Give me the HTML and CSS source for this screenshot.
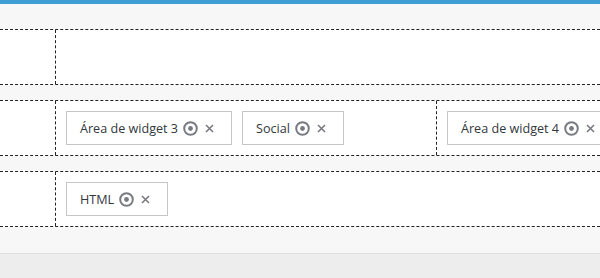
FILE: index.html
```html
<!DOCTYPE html>
<html lang="pt">
<head>
    <meta charset="UTF-8">
    <meta name="viewport" content="width=device-width, initial-scale=1.0">
    <title>Áreas de widgets</title>
    <link rel="stylesheet" href="styles.css">
</head>
<body>

<div class="top-bar"></div>

<div class="area-rows">
    <div class="area-row">
        <div class="area-label"></div>
        <div class="area-cell area-cell-wide"></div>
    </div>

    <div class="area-row">
        <div class="area-label"></div>
        <div class="area-cell area-cell-split">
            <span class="widget-chip">Área de widget 3
                <svg class="chip-target" width="15" height="15" viewBox="0 0 15 15"><circle cx="7.5" cy="7.5" r="6.3" fill="none" stroke="#787c82" stroke-width="2"/><circle cx="7.5" cy="7.5" r="2.4" fill="#787c82"/></svg>
                <svg class="chip-close" width="9" height="9" viewBox="0 0 9 9"><path d="M1 1L8 8M8 1L1 8" stroke="#787c82" stroke-width="1.6"/></svg>
            </span>
            <span class="widget-chip">Social
                <svg class="chip-target" width="15" height="15" viewBox="0 0 15 15"><circle cx="7.5" cy="7.5" r="6.3" fill="none" stroke="#787c82" stroke-width="2"/><circle cx="7.5" cy="7.5" r="2.4" fill="#787c82"/></svg>
                <svg class="chip-close" width="9" height="9" viewBox="0 0 9 9"><path d="M1 1L8 8M8 1L1 8" stroke="#787c82" stroke-width="1.6"/></svg>
            </span>
        </div>
        <div class="area-cell area-cell-wide">
            <span class="widget-chip">Área de widget 4
                <svg class="chip-target" width="15" height="15" viewBox="0 0 15 15"><circle cx="7.5" cy="7.5" r="6.3" fill="none" stroke="#787c82" stroke-width="2"/><circle cx="7.5" cy="7.5" r="2.4" fill="#787c82"/></svg>
                <svg class="chip-close" width="9" height="9" viewBox="0 0 9 9"><path d="M1 1L8 8M8 1L1 8" stroke="#787c82" stroke-width="1.6"/></svg>
            </span>
        </div>
    </div>

    <div class="area-row">
        <div class="area-label"></div>
        <div class="area-cell area-cell-wide">
            <span class="widget-chip">HTML
                <svg class="chip-target" width="15" height="15" viewBox="0 0 15 15"><circle cx="7.5" cy="7.5" r="6.3" fill="none" stroke="#787c82" stroke-width="2"/><circle cx="7.5" cy="7.5" r="2.4" fill="#787c82"/></svg>
                <svg class="chip-close" width="9" height="9" viewBox="0 0 9 9"><path d="M1 1L8 8M8 1L1 8" stroke="#787c82" stroke-width="1.6"/></svg>
            </span>
        </div>
    </div>
</div>

<div class="bottom-bar"></div>

</body>
</html>
```

FILE: styles.css
```css
body {
    margin: 0;
    font-family: 'Open Sans', 'Noto Sans', sans-serif;
    background-color: #f7f7f7;
    color: #32373c;
    overflow: hidden;
    height: 278px;
    display: flex;
    flex-direction: column;
}

.top-bar {
    height: 4px;
    background-color: #3f9fd5;
}

.area-rows {
    display: flex;
    flex-direction: column;
    gap: 15px;
    padding-top: 25px;
    overflow: hidden;
}

.area-row {
    display: flex;
    background: #fff;
    border-top: 1px dashed #222;
    border-bottom: 1px dashed #222;
    min-height: 54px;
}

.area-label {
    width: 55px;
    flex-shrink: 0;
    border-right: 1px dashed #222;
}

.area-cell {
    display: flex;
    align-items: center;
    gap: 10px;
    padding: 10px;
    box-sizing: border-box;
    min-width: 0;
    overflow: hidden;
}

.area-cell-split {
    width: 381px;
    flex-shrink: 0;
    border-right: 1px dashed #222;
}

.area-cell-wide {
    flex: 1;
}

.widget-chip {
    display: inline-flex;
    align-items: center;
    flex-shrink: 0;
    height: 34px;
    box-sizing: border-box;
    padding: 0 17px 0 13px;
    border: 1px solid #c6c6c6;
    background: #fff;
    font-size: 12.6px;
    white-space: nowrap;
}

.chip-target {
    margin-left: 5px;
}

.chip-close {
    margin-left: 7px;
}

.bottom-bar {
    margin-top: 26px;
    flex: 1;
    border-top: 1px solid #dedede;
    background-color: #ededed;
}
```
